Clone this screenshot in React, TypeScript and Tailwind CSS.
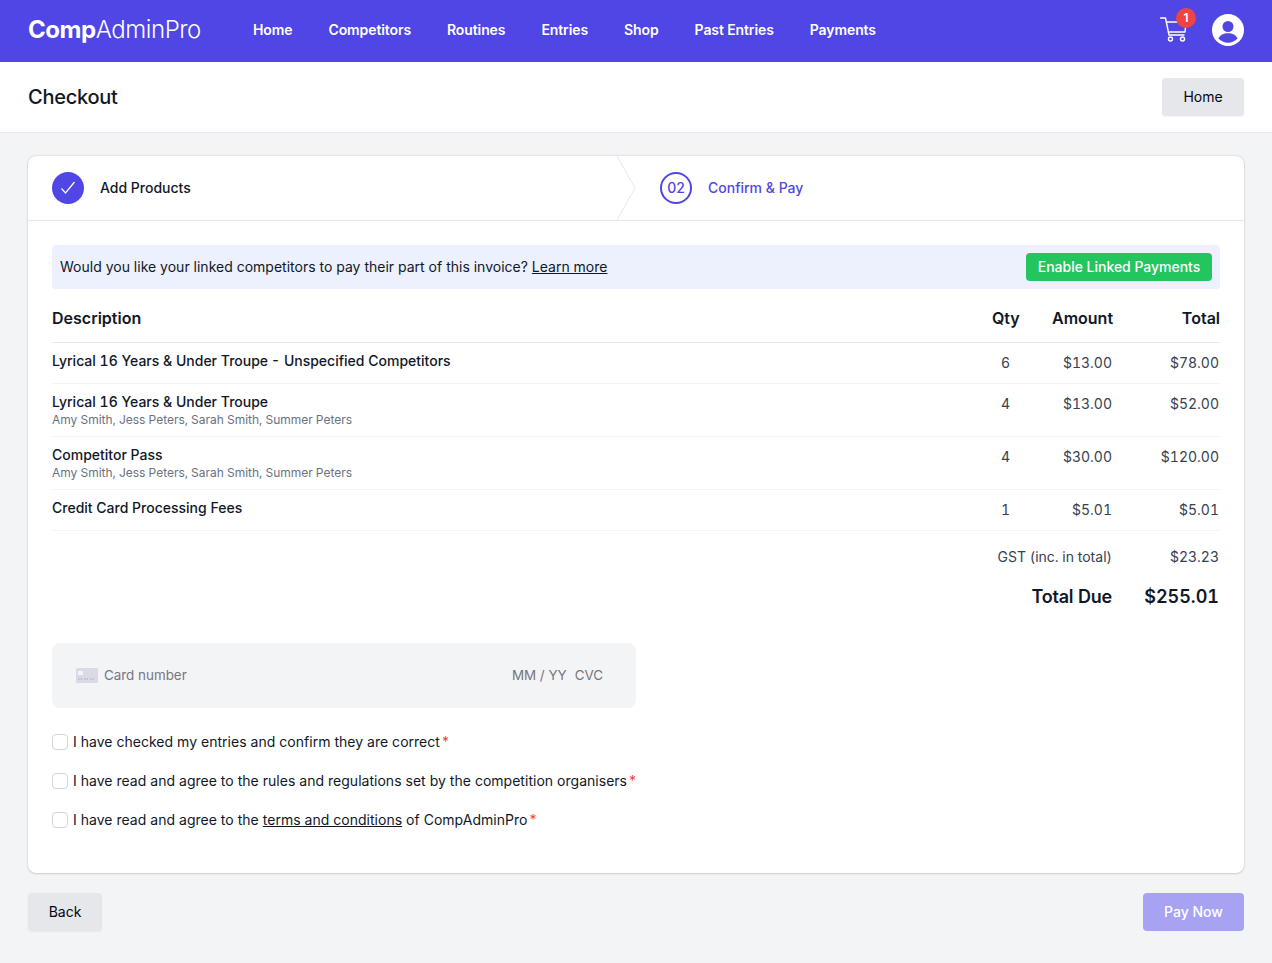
import React from 'react';

const NAV = ['Home', 'Competitors', 'Routines', 'Entries', 'Shop', 'Past Entries', 'Payments'];
const NAMES = 'Amy Smith, Jess Peters, Sarah Smith, Summer Peters';

const ROWS = [
  { title: 'Lyrical 16 Years & Under Troupe', suffix: 'Unspecified Competitors', qty: 6, amount: '$13.00', total: '$78.00', h: 'h-[41px]' },
  { title: 'Lyrical 16 Years & Under Troupe', sub: NAMES, qty: 4, amount: '$13.00', total: '$52.00', h: 'h-[53px]' },
  { title: 'Competitor Pass', sub: NAMES, qty: 4, amount: '$30.00', total: '$120.00', h: 'h-[53px]' },
  { title: 'Credit Card Processing Fees', qty: 1, amount: '$5.01', total: '$5.01', h: 'h-[41px]' },
];

function CartIcon() {
  return (
    <svg width="28" height="28" viewBox="0 0 28 28" fill="none" stroke="white" strokeWidth="1.4" strokeLinecap="round" strokeLinejoin="round">
      <path d="M0.500 2H5.500L9 19H24" />
      <path d="M6.500 6H26L25 16H8.500" />
      <circle cx="10.500" cy="23" r="2" />
      <circle cx="22.500" cy="23" r="2" />
    </svg>
  );
}

function UserIcon() {
  return (
    <svg width="32" height="32" viewBox="0 0 32 32">
      <circle cx="16" cy="16" r="16" fill="white" />
      <circle cx="16" cy="12.500" r="5.500" fill="#4f46e5" />
      <path d="M6.500 24.500c1.500-3.600 5-5.300 9.500-5.300s8 1.700 9.500 5.300c-2.400 2.600-5.800 4.200-9.500 4.200s-7.100-1.600-9.500-4.200z" fill="#4f46e5" />
    </svg>
  );
}

function CardIcon() {
  return (
    <svg width="22" height="15" viewBox="0 0 22 15">
      <rect width="22" height="15" rx="1.500" fill="#d8dbe6" />
      <rect x="2" y="3" width="5" height="4" rx="0.500" fill="#f3f4f6" />
      <path d="M2 11h4M8 11h4M14 11h4" stroke="#a9aebd" strokeWidth="1" strokeDasharray="1 0.500" />
    </svg>
  );
}

function Agree({ children }: { children: React.ReactNode }) {
  return (
    <label className="flex items-center text-sm text-gray-900 h-[20px]">
      <span className="w-4 h-4 rounded border border-gray-300 bg-white mr-[5px] shrink-0" />
      <span className="tracking-[0.02px]">{children}</span>
      <span className="text-[#ef4444] ml-[2px]">*</span>
    </label>
  );
}

export default function App() {
  return (
    <div className="min-h-[963px] bg-gray-100 font-['Inter',sans-serif] text-gray-900">
      <nav className="h-[62px] bg-[#4f46e5] pl-7 pr-7 pb-[2px] flex items-center text-white">
        <div className="text-[24px] w-[225px] tracking-[-0.45px]">
          <span className="font-bold">Comp</span>
          <span className="font-light">AdminPro</span>
        </div>
        <div className="flex gap-9 text-sm font-semibold tracking-[-0.1px]">
          {NAV.map((n) => (
            <a key={n}>{n}</a>
          ))}
        </div>
        <div className="ml-auto flex items-center gap-[24px]">
          <div className="relative w-[28px] h-[28px]">
            <CartIcon />
            <span className="absolute -top-[8px] left-[16px] w-5 h-5 rounded-full bg-[#ef4444] text-[12px] font-semibold flex items-center justify-center">1</span>
          </div>
          <UserIcon />
        </div>
      </nav>

      <header className="h-[71px] bg-white border-b border-gray-200 px-7 flex items-center justify-between">
        <h1 className="text-xl font-medium tracking-[-0.25px]">Checkout</h1>
        <button className="h-[38px] w-[82px] rounded bg-gray-200 text-sm text-gray-950 shadow-xs">Home</button>
      </header>

      <main className="px-7 pt-[23px]">
        <section className="bg-white rounded-lg shadow-[0_0_2px_rgba(0,0,0,0.2),0_1px_2px_rgba(0,0,0,0.1)] h-[717px]">
          <div className="relative h-[65px] border-b border-gray-200 flex items-center px-6">
            <div className="w-[590px] flex items-center gap-4">
              <span className="w-8 h-8 rounded-full bg-[#4f46e5] flex items-center justify-center">
                <svg width="16" height="16" viewBox="0 0 16 16" fill="none" stroke="white" strokeWidth="1.200">
                  <path d="M1.500 8.500l4 4.500 9-11" />
                </svg>
              </span>
              <span className="text-sm font-medium">Add Products</span>
            </div>
            <svg className="absolute left-[589px] top-0" width="20" height="64" viewBox="0 0 20 64" fill="none" stroke="#e5e7eb">
              <path d="M0 0l18 32L0 64" />
            </svg>
            <div className="ml-[18px] flex items-center gap-4">
              <span className="w-8 h-8 rounded-full border-2 border-[#4f46e5] text-[#4f46e5] text-sm font-medium flex items-center justify-center">02</span>
              <span className="text-sm font-medium text-[#4f46e5]">Confirm &amp; Pay</span>
            </div>
          </div>

          <div className="px-6 pt-6">
            <div className="h-11 bg-[#ecf1fd] rounded flex items-center justify-between px-2 text-sm">
              <p>
                Would you like your linked competitors to pay their part of this invoice? <a className="underline">Learn more</a>
              </p>
              <button className="h-7 w-[186px] rounded bg-[#22c55e] text-white text-sm font-medium tracking-[-0.02px]">Enable Linked Payments</button>
            </div>

            <div className="flex items-center h-[54px] pt-1 border-b border-gray-200 font-semibold">
              <span className="flex-1">Description</span>
              <span className="w-[27px] text-right mr-[33px]">Qty</span>
              <span className="w-[61px] text-right">Amount</span>
              <span className="w-[107px] text-right">Total</span>
            </div>

            {ROWS.map((r) => (
              <div key={r.title + r.qty + r.total} className={`flex border-b border-gray-100 text-sm tabular-nums ${r.h}`}>
                <div className="flex-1 pt-2">
                  <div className="font-medium">
                    {r.title}
                    {r.suffix && <span className="ml-[3px]">- {r.suffix}</span>}
                  </div>
                  {r.sub && <div className="text-xs text-gray-500 tracking-[-0.02px]">{r.sub}</div>}
                </div>
                <span className="w-[27px] pt-[10px] text-center text-[#374151] mr-[33px] -translate-x-px">{r.qty}</span>
                <span className="w-[60px] pt-[10px] text-right text-[#374151] -translate-x-px">{r.amount}</span>
                <span className="w-[107px] pt-[10px] text-right text-[#374151] -translate-x-px">{r.total}</span>
              </div>
            ))}

            <div className="flex justify-end text-sm text-[#374151] mt-[16px] h-[20px] tabular-nums -translate-x-px">
              <span>GST (inc. in total)</span>
              <span className="w-[107px] text-right">$23.23</span>
            </div>
            <div className="flex justify-end font-semibold mt-[16px] items-center h-[28px] text-lg tabular-nums -translate-x-px">
              <span className="tracking-[-0.2px]">Total Due</span>
              <span className="w-[107px] text-right">$255.01</span>
            </div>

            <div className="mt-[32px] w-[584px] h-[65px] bg-gray-100 rounded-lg flex items-center pl-6 pr-[33px] text-[13.4px] text-[#757680]">
              <CardIcon />
              <span className="ml-[6px]">Card number</span>
              <span className="ml-auto">MM / YY</span>
              <span className="ml-2">CVC</span>
            </div>

            <div className="mt-[24px] flex flex-col gap-[19px]">
              <Agree>I have checked my entries and confirm they are correct</Agree>
              <Agree>I have read and agree to the rules and regulations set by the competition organisers</Agree>
              <Agree>
                I have read and agree to the <a className="underline">terms and conditions</a> of CompAdminPro
              </Agree>
            </div>
          </div>
        </section>

        <div className="mt-5 flex justify-between">
          <button className="h-[38px] w-[74px] rounded bg-gray-200 text-sm text-gray-950 shadow-xs">Back</button>
          <button className="h-[38px] w-[101px] rounded bg-[#a7a3f2] text-white text-sm font-medium">Pay Now</button>
        </div>
      </main>
    </div>
  );
}
